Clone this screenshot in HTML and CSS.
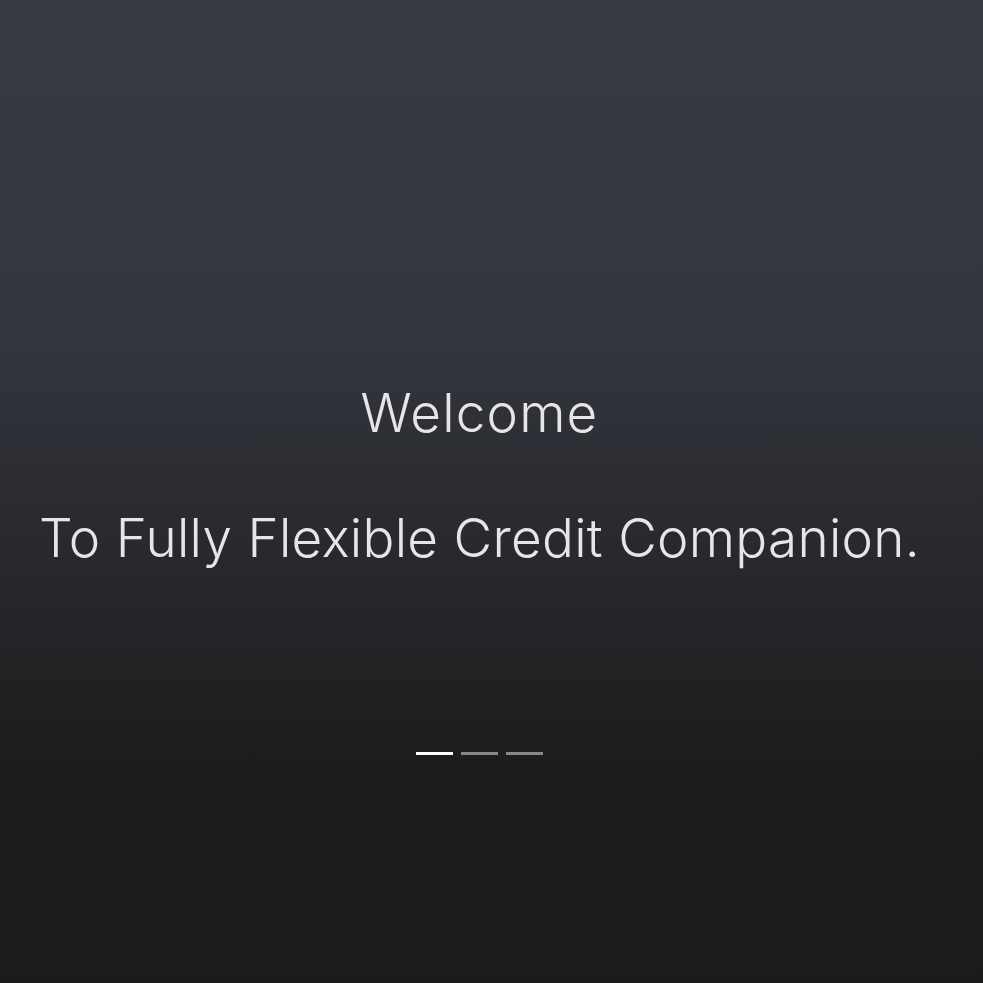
FILE: index.html
```html
<!DOCTYPE html>
<html>
<head>
<meta charset="utf-8">
<link rel="stylesheet" href="styles.css">
</head>
<body>
<main class="screen">
  <section class="intro">
    <h1 class="title">Welcome</h1>
    <p class="subtitle">To Fully Flexible Credit Companion.</p>
  </section>
  <div class="dots">
    <span class="dot active"></span>
    <span class="dot"></span>
    <span class="dot"></span>
  </div>
</main>
</body>
</html>
```
FILE: styles.css
```css
html, body { margin: 0; padding: 0; height: 100%; }
body {
  background: linear-gradient(to bottom, #373a43 0px, #33363e 330px, #1d1d1e 760px, #1b1b1b 983px);
  font-family: "Inter", "Open Sans", sans-serif;
  color: #e9e5e6;
}
.screen {
  height: 983px;
  display: flex;
  flex-direction: column;
  align-items: center;
  width: 959px;
}
.intro { display: flex; flex-direction: column; align-items: center; padding-top: 382px; }
.title, .subtitle {
  margin: 0;
  font-weight: 300;
  font-size: 53px;
  line-height: 62px;
  white-space: nowrap;
}
.title { letter-spacing: 1.2px; }
.subtitle { margin-top: 63px; letter-spacing: 0.3px; }
.dots { display: flex; gap: 8px; margin-top: 183px; }
.dot { width: 37px; height: 3px; background: #888; }
.dot.active { background: #fff; }
```
